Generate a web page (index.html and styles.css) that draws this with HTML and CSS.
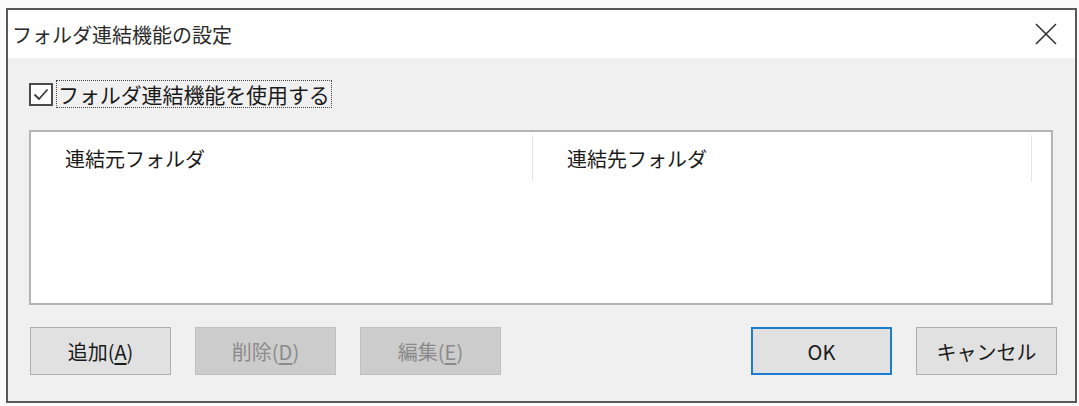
FILE: index.html
```html
<!DOCTYPE html>
<html lang="ja">
<head>
    <meta charset="UTF-8">
    <title>フォルダ連結機能の設定</title>
    <link rel="stylesheet" href="styles.css">
</head>
<body>
    <div class="dialog">
        <div class="titlebar">
            <span class="title">フォルダ連結機能の設定</span>
            <svg class="close" width="22" height="22" viewBox="0 0 22 22">
                <path d="M1 1 L21 21 M21 1 L1 21" stroke="#333" stroke-width="1.6" fill="none"/>
            </svg>
        </div>
        <div class="content">
            <label class="check-row">
                <span class="checkbox">
                    <svg width="20" height="19" viewBox="0 0 20 19">
                        <path d="M3.5 9.5 L8 14 L16.5 4.5" stroke="#3a3a3a" stroke-width="1.8" fill="none"/>
                    </svg>
                </span>
                <span class="check-label">フォルダ連結機能を使用する</span>
            </label>

            <div class="listview">
                <div class="list-header">
                    <div class="col col-src">連結元フォルダ</div>
                    <div class="col col-dst">連結先フォルダ</div>
                    <div class="col col-rest"></div>
                </div>
            </div>

            <div class="button-row">
                <div class="left-buttons">
                    <button class="btn">追加(<u>A</u>)</button>
                    <button class="btn" disabled>削除(<u>D</u>)</button>
                    <button class="btn" disabled>編集(<u>E</u>)</button>
                </div>
                <div class="right-buttons">
                    <button class="btn btn-default">OK</button>
                    <button class="btn">キャンセル</button>
                </div>
            </div>
        </div>
    </div>
</body>
</html>
```

FILE: styles.css
```css
body {
    margin: 0;
    padding: 8px 0 0 6px;
    background: #fbfbfb;
    font-family: "Noto Sans CJK JP", "Noto Sans", sans-serif;
    color: #1a1a1a;
}

.dialog {
    width: 1071px;
    height: 395px;
    box-sizing: border-box;
    border: 2px solid #595959;
    display: flex;
    flex-direction: column;
}

.titlebar {
    height: 48px;
    background: #fff;
    display: flex;
    align-items: center;
    justify-content: space-between;
    padding: 0 18px 0 4px;
}
.title {
    font-size: 20px;
    color: #2a2a2a;
}

.content {
    flex: 1;
    background: #f0f0f0;
    padding: 22px 18px 26px 21px;
    display: flex;
    flex-direction: column;
}

.check-row {
    display: flex;
    align-items: center;
    height: 28px;
}
.checkbox {
    width: 20px;
    height: 19px;
    border: 2px solid #4a4a4a;
    background: #fff;
    display: flex;
}
.check-label {
    margin-left: 4px;
    padding: 0 1px;
    font-size: 21px;
    line-height: 26px;
    letter-spacing: -0.1px;
    outline: 1px dotted #444;
}

.listview {
    margin: 22px 4px 0 0;
    height: 175px;
    box-sizing: border-box;
    border: 2px solid #b4b4b4;
    background: #fff;
}
.list-header {
    display: flex;
    height: 50px;
}
.col {
    font-size: 20px;
    display: flex;
    align-items: center;
    border-right: 1px solid #e6e6e6;
    margin-top: 3px;
}
.col-src {
    width: 467px;
    padding-left: 34px;
}
.col-dst {
    width: 464px;
    padding-left: 34px;
}
.col-rest {
    flex: 1;
    border-right: none;
}

.button-row {
    margin-top: 22px;
    margin-left: 1px;
    display: flex;
    justify-content: space-between;
}
.left-buttons,
.right-buttons {
    display: flex;
    gap: 24px;
}
.btn {
    width: 141px;
    height: 48px;
    box-sizing: border-box;
    border: 1px solid #adadad;
    background: #e1e1e1;
    font-family: inherit;
    font-size: 20px;
    color: #1a1a1a;
    padding: 0;
}
.btn u {
    text-underline-offset: 3px;
}
.btn:disabled {
    background: #cccccc;
    border-color: #bfbfbf;
    color: #8a8a8a;
}
.btn-default {
    border: 2px solid #1a7dd0;
}
```
